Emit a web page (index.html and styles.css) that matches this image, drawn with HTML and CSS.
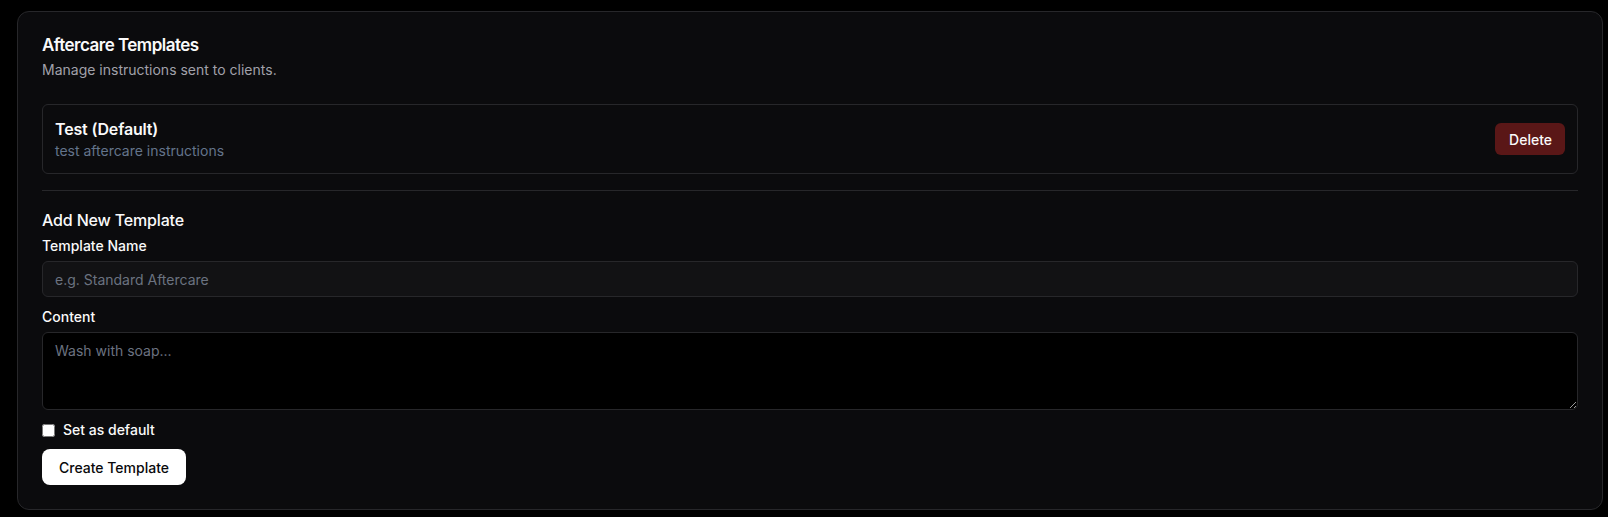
FILE: index.html
```html
<!DOCTYPE html>
<html>
<head>
    <meta charset="utf-8">
    <meta name="viewport" content="width=device-width">
    <title>Aftercare Templates</title>
    <link rel="stylesheet" href="styles.css">
</head>
<body>
    <div class="card">
        <div class="card-header">
            <h2 class="card-title">Aftercare Templates</h2>
            <p class="card-desc">Manage instructions sent to clients.</p>
        </div>

        <div class="card-content">
            <div class="template-item">
                <div class="template-info">
                    <div class="template-name">Test (Default)</div>
                    <div class="template-text">test aftercare instructions</div>
                </div>
                <button class="btn-delete" type="button">Delete</button>
            </div>

            <div class="divider"></div>

            <form id="new-template" class="new-form">
                <h3 class="form-title">Add New Template</h3>

                <label class="field-label" for="tpl-name">Template Name</label>
                <input class="field-input" type="text" id="tpl-name" placeholder="e.g. Standard Aftercare">

                <label class="field-label label-content" for="tpl-content">Content</label>
                <textarea class="field-area" id="tpl-content" placeholder="Wash with soap..."></textarea>

                <label class="check-row">
                    <input type="checkbox" id="tpl-default">
                    <span>Set as default</span>
                </label>

                <button class="btn-create" type="submit">Create Template</button>
            </form>
        </div>
    </div>
</body>
</html>
```

FILE: styles.css
```css
* {
    box-sizing: border-box;
}

body {
    margin: 0;
    padding: 11px 5px 7px 17px;
    background-color: #000;
    color: #fafafa;
    font-family: Inter, "Noto Sans", sans-serif;
}

.card {
    background-color: #0b0b0d;
    border: 1px solid #27272a;
    border-radius: 12px;
}

.card-header {
    padding: 24px;
}

.card-title {
    margin: 0;
    font-size: 17px;
    font-weight: 600;
    line-height: 18px;
    letter-spacing: -0.03em;
}

.card-desc {
    margin: 6px 0 0 0;
    font-size: 14px;
    line-height: 20px;
    color: #a1a1aa;
}

.card-content {
    padding: 0 24px 24px 24px;
}

.template-item {
    display: flex;
    align-items: center;
    justify-content: space-between;
    padding: 12px;
    border: 1px solid #27272a;
    border-radius: 6px;
}

.template-name {
    font-size: 16px;
    font-weight: 600;
    line-height: 24px;
    letter-spacing: -0.01em;
}

.template-text {
    font-size: 14px;
    line-height: 20px;
    color: #64748b;
}

.btn-delete {
    height: 32px;
    padding: 0 13px 0 14px;
    background-color: #5a1717;
    color: #fafafa;
    border: none;
    border-radius: 6px;
    font-family: inherit;
    font-size: 14px;
    font-weight: 500;
    cursor: pointer;
}

.divider {
    height: 1px;
    margin: 16px 0;
    background-color: #27272a;
}

.new-form {
    display: flex;
    flex-direction: column;
    align-items: flex-start;
}

.form-title {
    margin: 0;
    font-size: 16px;
    font-weight: 500;
    line-height: 26px;
    letter-spacing: -0.01em;
}

.field-label {
    margin-top: 6px;
    font-size: 14px;
    font-weight: 500;
    line-height: 14px;
}

.label-content {
    margin-top: 13px;
}

.field-input,
.field-area {
    width: 100%;
    margin-top: 8px;
    padding: 8px 12px;
    border: 1px solid #27272a;
    border-radius: 6px;
    color: #fafafa;
    font-family: inherit;
    font-size: 14px;
}

.field-input {
    height: 36px;
    background-color: #121214;
}

.field-area {
    height: 78px;
    background-color: #000;
    line-height: 20px;
    resize: vertical;
}

.field-input::placeholder,
.field-area::placeholder {
    color: #6b7280;
}

.check-row {
    display: flex;
    align-items: center;
    gap: 8px;
    margin-top: 10px;
    font-size: 14px;
    font-weight: 500;
    line-height: 20px;
}

.check-row input {
    width: 13px;
    height: 13px;
    margin: 0;
}

.btn-create {
    height: 36px;
    margin-top: 9px;
    padding: 0 17px;
    background-color: #fff;
    color: #09090b;
    border: none;
    border-radius: 8px;
    font-family: inherit;
    font-size: 14px;
    font-weight: 500;
    cursor: pointer;
}
```
